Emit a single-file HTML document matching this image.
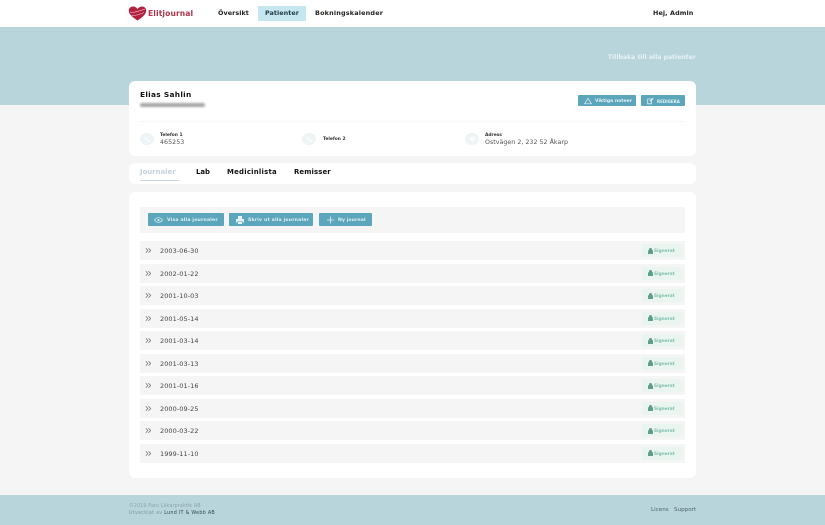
<!DOCTYPE html>
<html lang="sv">
<head>
<meta charset="utf-8">
<title>Elitjournal</title>
<style>
html,body{margin:0;padding:0}
body{width:825px;height:525px;position:relative;overflow:hidden;background:#f5f5f5;font-family:"DejaVu Sans","Liberation Sans",sans-serif;color:#222;filter:blur(.25px)}
.a{position:absolute}
.t{position:absolute;white-space:nowrap;line-height:1}
.card{position:absolute;left:129px;width:567px;background:#fff;border-radius:6px}
.btn{position:absolute;background:#5ca6bb;border-radius:1px;color:#e4f1f5;font-weight:700;font-size:4.6px;line-height:1}
.btn span{position:absolute;top:6px;white-space:nowrap;letter-spacing:.2px}
.btn svg{position:absolute;top:50%;transform:translateY(-50%)}
.row{position:absolute;left:140px;width:545px;height:19px;background:#f5f5f5}
.row>svg{position:absolute;left:5px;top:6px}
.row .d{position:absolute;left:20px;top:7px;font-size:6.5px;letter-spacing:.08px;line-height:1;color:#444;white-space:nowrap}
.row .s{position:absolute;right:2px;top:3px;width:41px;height:13px;background:#ebf5f0}
.row .s svg{position:absolute;left:6px;top:3.5px}
.row .s span{position:absolute;left:12px;top:6px;font-size:4.300px;font-weight:700;line-height:1;color:#7dbdab;white-space:nowrap}
.circ{position:absolute;width:14px;height:12px;border-radius:50%;background:#eef3f5}
.circ svg{position:absolute;left:3.500px;top:2.500px}
</style>
</head>
<body>
<div class="a" style="left:0;top:0;width:825px;height:27px;background:#fff"></div>
<div class="a" style="left:0;top:27px;width:825px;height:78px;background:#b9d5dc"></div>

<svg class="a" style="left:128px;top:6px" width="19" height="15" viewBox="0 0 19 15"><path d="M9.5 14.5C5 11.5.8 8.5.8 4.6.8 2 2.8.5 5 .5c2 0 3.500 1 4.500 2.500C10.500 1.500 12 .5 14 .5c2.200 0 4.200 1.500 4.200 4.100 0 3.900-4.200 6.900-8.700 9.900z" fill="#b3233f"/><path d="M2 6c4 1 9-1 15-3M3.500 9.500c4 .5 8-1 12.500-3" stroke="#f0c4cd" stroke-width=".6" fill="none"/></svg>
<div class="t" style="left:148px;top:9.500px;font-size:7.600px;font-weight:700;letter-spacing:.1px;color:#b3334d">Elitjournal</div>

<div class="a" style="left:258px;top:6px;width:48px;height:15px;background:#c6e7ef"></div>
<div class="t" style="left:218px;top:9.500px;font-size:6.400px;font-weight:700;letter-spacing:.06px">Översikt</div>
<div class="t" style="left:265px;top:9.500px;font-size:6.400px;font-weight:700;letter-spacing:.05px;color:#1f3a44">Patienter</div>
<div class="t" style="left:315px;top:9.500px;font-size:6.400px;font-weight:700;letter-spacing:.2px">Bokningskalender</div>
<div class="t" style="left:653px;top:9.500px;font-size:6.400px;font-weight:700;letter-spacing:.1px">Hej, Admin</div>

<div class="t" style="left:608px;top:54.500px;font-size:6px;color:#e6f2f5;font-weight:700;letter-spacing:.08px">Tillbaka till alla patienter</div>

<div class="card" style="top:81px;height:75px"></div>
<div class="t" style="left:140px;top:91px;font-size:7.400px;font-weight:700;letter-spacing:.3px;color:#111">Elias Sahlin</div>
<div class="a" style="left:140px;top:103px;width:65px;height:3.500px;background:#a5a5a5;border-radius:2px;filter:blur(1px)"></div>

<div class="btn" style="left:578px;top:95px;width:58px;height:11px"><svg style="left:6px" width="8" height="7" viewBox="0 0 8 7"><path d="M4 .8L7.400 6.300H.6z" fill="none" stroke="#e4f1f5" stroke-width=".7"/></svg><span style="left:17px;top:4.500px;letter-spacing:0">Viktiga noteer</span></div>
<div class="btn" style="left:641px;top:95px;width:44px;height:11px"><svg style="left:6px" width="7" height="7" viewBox="0 0 7 7"><path d="M.7 1.500h3.800v4.800H.7z" fill="none" stroke="#e4f1f5" stroke-width=".8"/><path d="M3 3.800L6.200.7" stroke="#e4f1f5" stroke-width="1.100"/></svg><span style="left:16px;top:4.500px;font-size:4px;letter-spacing:0">REDIGERA</span></div>

<div class="a" style="left:140px;top:121px;width:545px;height:1px;background:#f6f6f6"></div>

<div class="circ" style="left:140px;top:133px"><svg width="7" height="7" viewBox="0 0 7 7"><path d="M1 1c0 3 2 5 5 5l.5-1.500-1.500-1-1 .6-1.500-1.500.6-1L1.800.5z" fill="#fafcfc"/></svg></div>
<div class="t" style="left:160px;top:133.500px;font-size:4.400px;font-weight:700;color:#333">Telefon 1</div>
<div class="t" style="left:160px;top:140px;font-size:6.300px;color:#555;letter-spacing:.05px">465253</div>
<div class="circ" style="left:302px;top:133px"><svg width="7" height="7" viewBox="0 0 7 7"><path d="M1 1c0 3 2 5 5 5l.5-1.500-1.500-1-1 .6-1.500-1.500.6-1L1.800.5z" fill="#fafcfc"/></svg></div>
<div class="t" style="left:323px;top:137.500px;font-size:4.400px;font-weight:700;color:#333">Telefon 2</div>
<div class="circ" style="left:465px;top:133px"><svg width="7" height="7" viewBox="0 0 7 7"><path d="M3.500 6.500C1.500 4.500.5 3.500.5 2.300.5 1.200 1.500.5 3.500.5s3 .7 3 1.800c0 1.200-1 2.200-3 4.200z" fill="#fafcfc"/></svg></div>
<div class="t" style="left:485px;top:133.500px;font-size:4.400px;font-weight:700;color:#333">Adress</div>
<div class="t" style="left:485px;top:140px;font-size:6.300px;color:#555;letter-spacing:.02px">Ostvägen 2, 232 52 Åkarp</div>

<div class="card" style="top:163px;height:21px"></div>
<div class="t" style="left:140px;top:168.500px;font-size:6.900px;font-weight:700;color:#c3d4da">Journaler</div>
<div class="a" style="left:140px;top:180px;width:39px;height:1px;background:#c7dce2"></div>
<div class="t" style="left:196px;top:168.500px;font-size:6.900px;font-weight:700;color:#111">Lab</div>
<div class="t" style="left:227px;top:168.500px;font-size:6.900px;font-weight:700;letter-spacing:.25px;color:#111">Medicinlista</div>
<div class="t" style="left:294px;top:168.500px;font-size:6.900px;font-weight:700;letter-spacing:.12px;color:#111">Remisser</div>

<div class="card" style="top:192px;height:286px"></div>
<div class="a" style="left:140px;top:207px;width:545px;height:26px;background:#f5f5f5"></div>
<div class="btn" style="left:148px;top:213px;width:76px;height:13px"><svg style="left:6px" width="9" height="6" viewBox="0 0 9 6"><path d="M.5 3C2 1 3 .7 4.500.7S7 1 8.500 3C7 5 6 5.300 4.500 5.300S2 5 .5 3z" fill="none" stroke="#e4f1f5" stroke-width=".7"/><circle cx="4.500" cy="3" r="1" fill="#e4f1f5"/></svg><span style="left:19px">Visa alla journaler</span></div>
<div class="btn" style="left:229px;top:213px;width:84px;height:13px"><svg style="left:7px" width="8" height="8" viewBox="0 0 8 8"><path d="M2 0h4v3H2zM0 3h8v3.500H6.500V5h-5v1.500H0zM2 5.500h4V8H2z" fill="#e4f1f5"/></svg><span style="left:19px">Skriv ut alla journaler</span></div>
<div class="btn" style="left:319px;top:213px;width:53px;height:13px"><svg style="left:8px" width="7" height="7" viewBox="0 0 7 7"><path d="M3.500 0v7M0 3.500h7" stroke="#e4f1f5" stroke-width=".8"/></svg><span style="left:19px;letter-spacing:.1px">Ny journal</span></div>

<div class="row" style="top:241px"><svg width="7" height="7" viewBox="0 0 7 7"><path d="M.8 1.200L2.800 3.500.8 5.800M3.500 1.200L5.700 3.500 3.500 5.800" fill="none" stroke="#666" stroke-width=".7"/></svg><span class="d">2003-06-30</span><div class="s"><svg width="5" height="6" viewBox="0 0 5 6"><path d="M.3 2.500h4.400V6H.3zM1.200 2.500V1.500a1.300 1.300 0 0 1 2.600 0v1" fill="#5f9d8d" stroke="#5f9d8d" stroke-width=".5"/></svg><span>Signerat</span></div></div>
<div class="row" style="top:263.500px"><svg width="7" height="7" viewBox="0 0 7 7"><path d="M.8 1.200L2.800 3.500.8 5.800M3.500 1.200L5.700 3.500 3.500 5.800" fill="none" stroke="#666" stroke-width=".7"/></svg><span class="d">2002-01-22</span><div class="s"><svg width="5" height="6" viewBox="0 0 5 6"><path d="M.3 2.500h4.400V6H.3zM1.200 2.500V1.500a1.300 1.300 0 0 1 2.600 0v1" fill="#5f9d8d" stroke="#5f9d8d" stroke-width=".5"/></svg><span>Signerat</span></div></div>
<div class="row" style="top:286px"><svg width="7" height="7" viewBox="0 0 7 7"><path d="M.8 1.200L2.800 3.500.8 5.800M3.500 1.200L5.700 3.500 3.500 5.800" fill="none" stroke="#666" stroke-width=".7"/></svg><span class="d">2001-10-03</span><div class="s"><svg width="5" height="6" viewBox="0 0 5 6"><path d="M.3 2.500h4.400V6H.3zM1.200 2.500V1.500a1.300 1.300 0 0 1 2.600 0v1" fill="#5f9d8d" stroke="#5f9d8d" stroke-width=".5"/></svg><span>Signerat</span></div></div>
<div class="row" style="top:308.500px"><svg width="7" height="7" viewBox="0 0 7 7"><path d="M.8 1.200L2.800 3.500.8 5.800M3.500 1.200L5.700 3.500 3.500 5.800" fill="none" stroke="#666" stroke-width=".7"/></svg><span class="d">2001-05-14</span><div class="s"><svg width="5" height="6" viewBox="0 0 5 6"><path d="M.3 2.500h4.400V6H.3zM1.200 2.500V1.500a1.300 1.300 0 0 1 2.600 0v1" fill="#5f9d8d" stroke="#5f9d8d" stroke-width=".5"/></svg><span>Signerat</span></div></div>
<div class="row" style="top:331px"><svg width="7" height="7" viewBox="0 0 7 7"><path d="M.8 1.200L2.800 3.500.8 5.800M3.500 1.200L5.700 3.500 3.500 5.800" fill="none" stroke="#666" stroke-width=".7"/></svg><span class="d">2001-03-14</span><div class="s"><svg width="5" height="6" viewBox="0 0 5 6"><path d="M.3 2.500h4.400V6H.3zM1.200 2.500V1.500a1.300 1.300 0 0 1 2.600 0v1" fill="#5f9d8d" stroke="#5f9d8d" stroke-width=".5"/></svg><span>Signerat</span></div></div>
<div class="row" style="top:353.500px"><svg width="7" height="7" viewBox="0 0 7 7"><path d="M.8 1.200L2.800 3.500.8 5.800M3.500 1.200L5.700 3.500 3.500 5.800" fill="none" stroke="#666" stroke-width=".7"/></svg><span class="d">2001-03-13</span><div class="s"><svg width="5" height="6" viewBox="0 0 5 6"><path d="M.3 2.500h4.400V6H.3zM1.200 2.500V1.500a1.300 1.300 0 0 1 2.600 0v1" fill="#5f9d8d" stroke="#5f9d8d" stroke-width=".5"/></svg><span>Signerat</span></div></div>
<div class="row" style="top:376px"><svg width="7" height="7" viewBox="0 0 7 7"><path d="M.8 1.200L2.800 3.500.8 5.800M3.500 1.200L5.700 3.500 3.500 5.800" fill="none" stroke="#666" stroke-width=".7"/></svg><span class="d">2001-01-16</span><div class="s"><svg width="5" height="6" viewBox="0 0 5 6"><path d="M.3 2.500h4.400V6H.3zM1.200 2.500V1.500a1.300 1.300 0 0 1 2.600 0v1" fill="#5f9d8d" stroke="#5f9d8d" stroke-width=".5"/></svg><span>Signerat</span></div></div>
<div class="row" style="top:398.500px"><svg width="7" height="7" viewBox="0 0 7 7"><path d="M.8 1.200L2.800 3.500.8 5.800M3.500 1.200L5.700 3.500 3.500 5.800" fill="none" stroke="#666" stroke-width=".7"/></svg><span class="d">2000-09-25</span><div class="s"><svg width="5" height="6" viewBox="0 0 5 6"><path d="M.3 2.500h4.400V6H.3zM1.200 2.500V1.500a1.300 1.300 0 0 1 2.600 0v1" fill="#5f9d8d" stroke="#5f9d8d" stroke-width=".5"/></svg><span>Signerat</span></div></div>
<div class="row" style="top:421px"><svg width="7" height="7" viewBox="0 0 7 7"><path d="M.8 1.200L2.800 3.500.8 5.800M3.500 1.200L5.700 3.500 3.500 5.800" fill="none" stroke="#666" stroke-width=".7"/></svg><span class="d">2000-03-22</span><div class="s"><svg width="5" height="6" viewBox="0 0 5 6"><path d="M.3 2.500h4.400V6H.3zM1.200 2.500V1.500a1.300 1.300 0 0 1 2.600 0v1" fill="#5f9d8d" stroke="#5f9d8d" stroke-width=".5"/></svg><span>Signerat</span></div></div>
<div class="row" style="top:443.500px"><svg width="7" height="7" viewBox="0 0 7 7"><path d="M.8 1.200L2.800 3.500.8 5.800M3.500 1.200L5.700 3.500 3.500 5.800" fill="none" stroke="#666" stroke-width=".7"/></svg><span class="d">1999-11-10</span><div class="s"><svg width="5" height="6" viewBox="0 0 5 6"><path d="M.3 2.500h4.400V6H.3zM1.200 2.500V1.500a1.300 1.300 0 0 1 2.600 0v1" fill="#5f9d8d" stroke="#5f9d8d" stroke-width=".5"/></svg><span>Signerat</span></div></div>

<div class="a" style="left:0;top:495px;width:825px;height:30px;background:#b9d5dc"></div>
<div class="t" style="left:129px;top:505px;font-size:4.800px;letter-spacing:.12px;color:#8aa3ab">©2019 Pato Läkarpraktik AB</div>
<div class="t" style="left:129px;top:512px;font-size:4.800px;letter-spacing:.28px;color:#7f99a1">Utvecklat av <span style="color:#33474e">Lund IT &amp; Webb AB</span></div>
<div class="t" style="left:651px;top:508px;font-size:5.600px;color:#4f646c">Licens</div>
<div class="t" style="left:674px;top:508px;font-size:5.600px;color:#4f646c">Support</div>
</body>
</html>
